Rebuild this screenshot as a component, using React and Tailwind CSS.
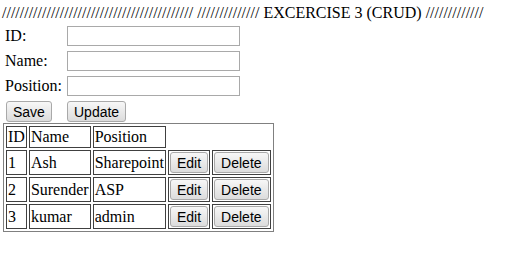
const serif = { fontFamily: '"Liberation Serif", "Times New Roman", serif' }

const btn =
  "h-[21px] px-[6px] border border-[#a9a9a9] rounded-[3px] bg-gradient-to-b from-[#f7f7f7] to-[#dcdcdc] text-black text-[14px] leading-none font-['Liberation_Sans',Arial,sans-serif]"

const rows = [
  { id: 1, name: "Ash", position: "Sharepoint" },
  { id: 2, name: "Surender", position: "ASP" },
  { id: 3, name: "kumar", position: "admin" },
]

const cell = "border border-[#404040] p-[1px] align-middle"

const App = () => {
  const fields = ["ID:", "Name:", "Position:"]

  return (
    <div className="w-[511px] h-[263px] bg-white text-black text-[16px]" style={serif}>
      {/* Heading */}
      <div className="h-[26px] pt-[4px] pl-[2px] leading-[18px] whitespace-nowrap">
        {"/".repeat(43)} {"/".repeat(14)} EXCERCISE 3 (CRUD) {"/".repeat(13)}
      </div>

      {/* Form */}
      <div className="flex flex-col gap-[5px]">
        {fields.map((label) => (
          <div key={label} className="flex items-center h-[20px]">
            <span className="w-[67px] pl-[5px] leading-[18px]">{label}</span>
            <input
              type="text"
              className="w-[173px] h-[20px] border border-[#a9a9a9] bg-white outline-none"
            />
          </div>
        ))}
        <div className="flex items-center h-[21px]">
          <div className="w-[67px] pl-[6px]">
            <button type="button" className={btn}>Save</button>
          </div>
          <button type="button" className={btn}>Update</button>
        </div>
      </div>

      {/* Table */}
      <table className="mt-[1px] ml-[3px] border-separate border-spacing-[2px] border border-[#808080] leading-[18px]">
        <tbody>
          <tr>
            <td className={cell}>ID</td>
            <td className={cell}>Name</td>
            <td className={cell}>Position</td>
          </tr>
          {rows.map((r) => (
            <tr key={r.id}>
              <td className={cell}>{r.id}</td>
              <td className={cell}>{r.name}</td>
              <td className={cell}>{r.position}</td>
              <td className={cell}>
                <button type="button" className={`${btn} block`}>Edit</button>
              </td>
              <td className={cell}>
                <button type="button" className={`${btn} block`}>Delete</button>
              </td>
            </tr>
          ))}
        </tbody>
      </table>
    </div>
  )
}

export default App
